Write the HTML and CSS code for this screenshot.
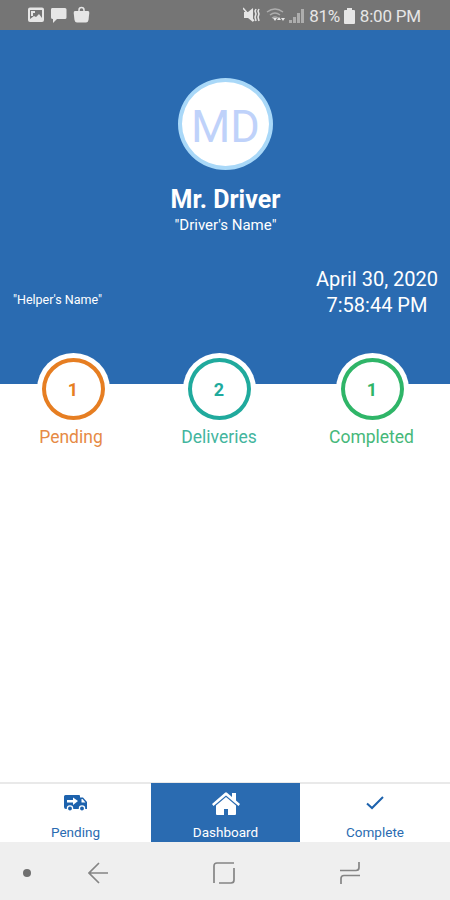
FILE: index.html
```html
<!DOCTYPE html>
<html lang="en">
<head>
  <meta charset="UTF-8">
  <meta name="viewport" content="width=device-width, initial-scale=1.0">
  <title>Driver Dashboard</title>
  <link rel="stylesheet" href="styles.css">
</head>
<body>
  <div class="screen">
    <!-- Status bar -->
    <div class="status-bar">
      <svg class="status-left" width="62" height="18" viewBox="0 0 62 18">
        <path fill-rule="evenodd" d="M2 1.500h12q2 0 2 2v10.500q0 2-2 2H2q-2 0-2-2V3.500q0-2 2-2zM2 4v9l4-3 2 1 3-3 3 4V4zM3 5h4v2H5v3H3z"/>
        <path d="M24 2h13q1.500 0 1.500 1.500v8q0 1.500-1.500 1.500H29l-4 4v-4q-2 0-2-1.500v-8q0-1.500 1-1.500z"/>
        <path d="M47 5h13q1.500 0 1.300 2l-.8 7q-.5 2.500-2.500 2.500h-9q-2 0-2.500-2.500l-.8-7q-.2-2 1.300-2z"/>
        <path class="line" d="M51 6V4q0-2.500 2.500-2.500T56 4v2"/>
      </svg>
      <div class="status-right">
        <svg width="62" height="18" viewBox="0 0 62 18">
          <path d="M1 6h4l5-4v14l-5-4H1z"/>
          <path class="line" d="M0 2l11 13M13 3l-1 2 1 3-1 3 1 4M16 3l-1 2 1 3-1 3 1 4"/>
          <g class="faint">
            <path class="line" d="M24 6q8-6 16 0M27 9q5-4 10 0M29 12q3-2 6 0"/>
            <path d="M46 17v-3h3v3zM50 17v-6h3v6zM54 17V7h3v10zM58 17V3h3v14z"/>
          </g>
          <path d="M30 12h4l-2 3zM34 14l2-3 2 3zM38 12h4l-2 3z"/>
        </svg>
        <span class="battery-level">81%</span>
        <svg class="battery" width="11" height="16" viewBox="0 0 11 16"><path d="M3 0h5v2h2q1 0 1 1v12q0 1-1 1H1q-1 0-1-1V3q0-1 1-1h2z"/></svg>
        <span class="clock">8:00 PM</span>
      </div>
    </div>

    <!-- Driver details -->
    <header class="hero">
      <div class="avatar"><span>MD</span></div>
      <h1>Mr. Driver</h1>
      <p class="role">"Driver's Name"</p>
      <div class="hero-info">
        <p class="helper">"Helper's Name"</p>
        <div class="datetime">
          <div class="date">April 30, 2020</div>
          <div class="time">7:58:44 PM</div>
        </div>
      </div>
    </header>

    <!-- Delivery counts -->
    <main class="stats">
      <div class="stat pending">
        <div class="circle"><span>1</span></div>
        <div class="label">Pending</div>
      </div>
      <div class="stat deliveries">
        <div class="circle"><span>2</span></div>
        <div class="label">Deliveries</div>
      </div>
      <div class="stat completed">
        <div class="circle"><span>1</span></div>
        <div class="label">Completed</div>
      </div>
    </main>

    <!-- Tabs -->
    <nav class="tabs">
      <a class="tab">
        <svg width="24" height="17" viewBox="0 0 24 17">
          <path d="M1.500 0H15q1 0 1 1v1.500h3l4 4.500v7h-2H2q-2 0-2-2V1.500Q0 0 1.500 0z"/>
          <path fill="#fff" d="M3 5h6V2.500L14 6l-5 4V7.500H3zM17.500 4h1l3 3.500h-4z"/>
          <circle cx="6" cy="13.500" r="2.600" stroke="#fff" stroke-width="1.300"/>
          <circle cx="18" cy="13.500" r="2.600" stroke="#fff" stroke-width="1.300"/>
        </svg>
        <span>Pending</span>
      </a>
      <a class="tab active">
        <svg width="28" height="23" viewBox="0 0 28 23">
          <path d="M13 .7q1-.8 2 0L20 5V1h4v7.500l4 3.500-1.500 2L14 3.500 1.500 14 0 12z"/>
          <path d="M14 5l10 8.500V22q0 1-1 1h-7v-6h-4v6H5q-1 0-1-1v-8.500z"/>
        </svg>
        <span>Dashboard</span>
      </a>
      <a class="tab">
        <svg width="18" height="14" viewBox="0 0 18 14"><path class="stroke" d="M1 7.500l5 4.500L17 1"/></svg>
        <span>Complete</span>
      </a>
    </nav>

    <!-- Android navigation -->
    <div class="system-nav">
      <span class="dot"></span>
      <svg class="back" width="21" height="22" viewBox="0 0 21 22"><path d="M11 1L1 11l10 10M1 11h19"/></svg>
      <svg class="home" width="22" height="22" viewBox="0 0 22 22"><path d="M1 21V4q0-3 3-3h17M21 6v12q0 3-3 3H6"/></svg>
      <svg class="recent" width="22" height="22" viewBox="0 0 22 22"><path d="M1 8.500h16q3 0 3-3V0M21 13.500H5q-3 0-3 3V22"/></svg>
    </div>
  </div>
</body>
</html>
```
FILE: styles.css
```css
* {
  box-sizing: border-box;
}
body {
  margin: 0;
  font-family: Roboto, sans-serif;
  background: #fff;
}
h1,
p {
  margin: 0;
}
.screen {
  display: flex;
  flex-direction: column;
  width: 450px;
  height: 900px;
  overflow: hidden;
}

/* Status bar */
.status-bar {
  display: flex;
  justify-content: space-between;
  height: 30px;
  padding: 6px 29px 0 28px;
  background: #757575;
  color: #e6e6e6;
  font-size: 17px;
  line-height: 20px;
  white-space: nowrap;
}
.status-bar svg {
  fill: #e6e6e6;
  flex: none;
}
.status-bar .line {
  fill: none;
  stroke: #e6e6e6;
  stroke-width: 1.5;
}
.status-bar .faint {
  opacity: 0.5;
}
.status-right {
  display: flex;
}
.status-right span {
  flex: none;
}
.battery-level {
  margin-left: 4px;
  letter-spacing: -0.3px;
}
.battery {
  margin: 2px 5px 0 4px;
}
.clock {
  letter-spacing: -0.2px;
}

/* Driver details */
.hero {
  height: 354px;
  padding-top: 48px;
  background: #2a6bb1;
  color: #fff;
  text-align: center;
}
.avatar {
  display: flex;
  align-items: center;
  justify-content: center;
  width: 95px;
  height: 92px;
  margin: 0 auto;
  padding: 4px 0 0 1px;
  border: 4px solid #a9d8f8;
  border-radius: 50%;
  background: #fff;
  color: #bfd2fa;
  font-size: 45px;
}
.hero h1 {
  margin-top: 16px;
  padding-left: 1px;
  font-size: 25px;
  font-weight: 700;
  line-height: 28px;
}
.role {
  margin-top: 2px;
  padding-left: 1px;
  font-size: 15px;
  line-height: 18px;
}
.hero-info {
  display: flex;
  align-items: center;
  justify-content: space-between;
  height: 52px;
  margin-top: 32px;
  padding: 0 12px;
}
.helper {
  padding: 15px 0 0 1px;
  font-size: 12.500px;
}
.datetime {
  font-size: 20px;
  line-height: 26px;
}

/* Delivery counts */
.stats {
  display: grid;
  grid-template-columns: 146px 146px 160px;
  flex: 1;
  margin-top: -31px;
}
.stat {
  display: flex;
  flex-direction: column;
  align-items: center;
}
.circle {
  display: flex;
  align-items: center;
  justify-content: center;
  width: 73px;
  height: 72px;
  padding: 5px;
  border-radius: 50%;
  background: #fff;
  font-size: 18px;
  font-weight: 700;
}
.circle span {
  width: 63px;
  height: 62px;
  border: 4px solid;
  border-radius: 50%;
  line-height: 55px;
  text-align: center;
}
.label {
  margin-top: 1px;
  font-size: 17.500px;
  line-height: 22px;
}
.pending {
  color: #e67e22;
}
.pending .label {
  padding-right: 4px;
  color: #e68a45;
}
.deliveries {
  color: #20aa9d;
}
.deliveries .label {
  color: #43b59e;
}
.completed {
  color: #2fb568;
}
.completed .label {
  padding-right: 1px;
  color: #46b87a;
}

/* Tabs */
.tabs {
  display: grid;
  grid-template-columns: 151px 149px 150px;
  height: 60px;
  border-top: 2px solid #e9e9e9;
}
.tab {
  display: flex;
  flex-direction: column;
  align-items: center;
  justify-content: flex-end;
  margin-top: -1px;
  padding-bottom: 2px;
  color: #2a6bb1;
  font-size: 13.500px;
  line-height: 16px;
}
.tab svg {
  margin-bottom: 12px;
  fill: #1d62ad;
}
.tab .stroke {
  fill: none;
  stroke: #1d62ad;
  stroke-width: 2;
}
.tab:last-child svg {
  margin-bottom: 14px;
}
.tab.active {
  background: #2a6bb1;
  color: #fff;
}
.tab.active svg {
  margin-bottom: 9px;
  fill: #fff;
}

/* Android navigation */
.system-nav {
  display: flex;
  align-items: center;
  height: 58px;
  padding: 3px 0 0 23px;
  background: #efefef;
}
.system-nav svg {
  fill: none;
  stroke: #858585;
  stroke-width: 1.7;
}
.dot {
  width: 8px;
  height: 8px;
  border-radius: 50%;
  background: #707070;
}
.back {
  margin-left: 57px;
}
.home {
  margin-left: 104px;
}
.recent {
  margin-left: 104px;
}
```
